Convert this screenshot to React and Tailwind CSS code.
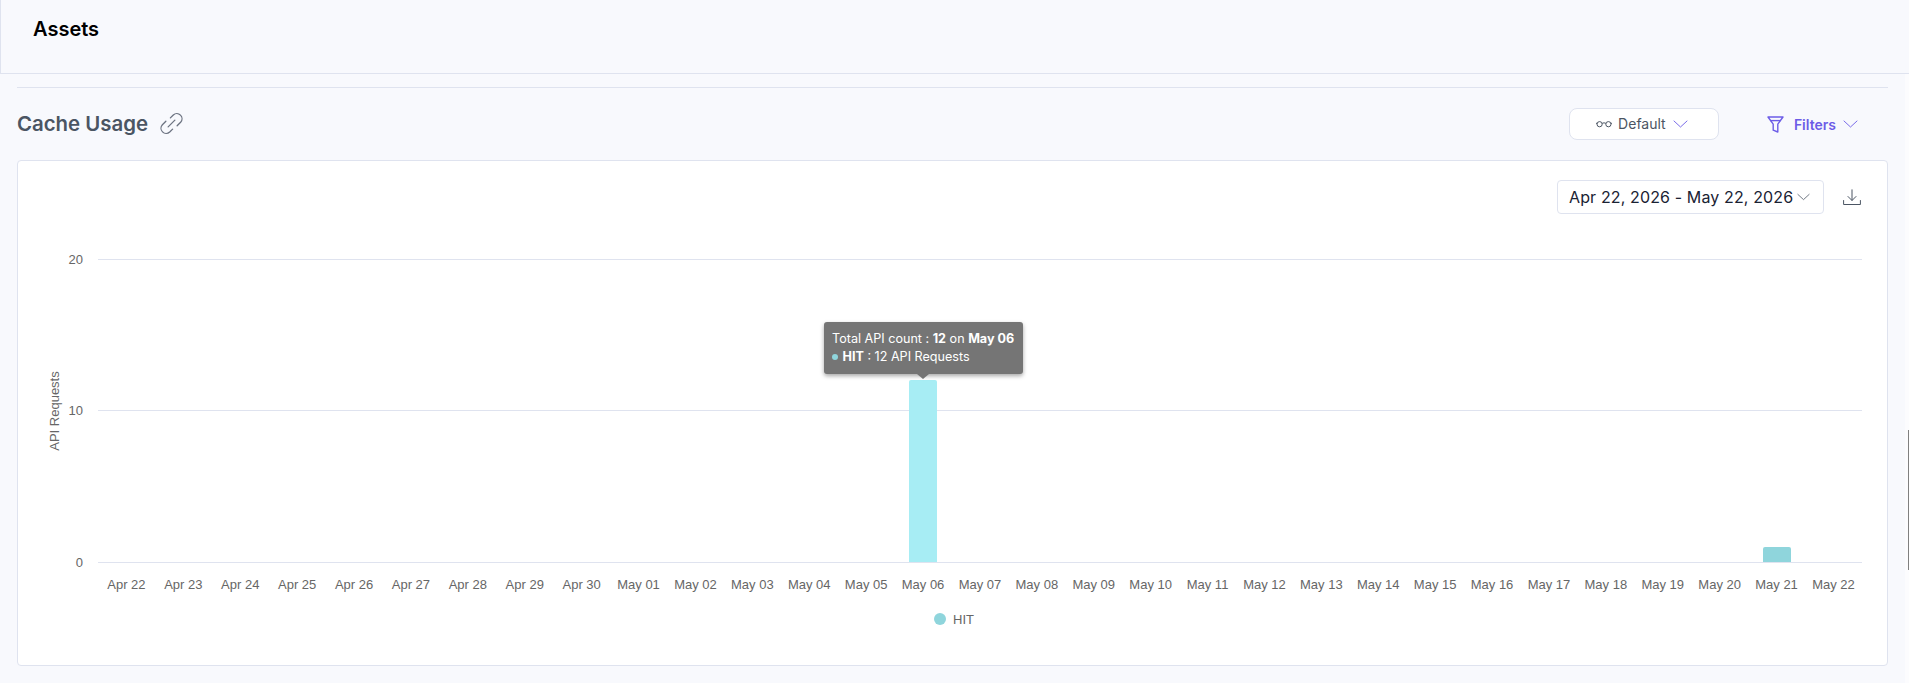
const inter = "font-['Inter',sans-serif]";

const days = [
  "Apr 22", "Apr 23", "Apr 24", "Apr 25", "Apr 26", "Apr 27", "Apr 28", "Apr 29", "Apr 30",
  "May 01", "May 02", "May 03", "May 04", "May 05", "May 06", "May 07", "May 08", "May 09",
  "May 10", "May 11", "May 12", "May 13", "May 14", "May 15", "May 16", "May 17", "May 18",
  "May 19", "May 20", "May 21", "May 22",
];

const plotLeft = 80;
const slot = 56.9;

const Chevron = ({ color, width = 15 }) => (
  <svg width={width} height="8" viewBox="0 0 15 8" fill="none" stroke={color} strokeWidth="0.9" strokeLinecap="round" strokeLinejoin="round" className="shrink-0">
    <path d="M1 1l6.5 6L14 1" />
  </svg>
);

const LinkIcon = () => (
  <svg width="27" height="27" viewBox="0 0 24 24" fill="none" stroke="#6b7280" strokeWidth="1.15" strokeLinecap="round">
    <path d="M11 7l2.6-2.6a4.6 4.6 0 0 1 6.5 6.5L17 14" />
    <path d="M13 17l-2.6 2.6a4.6 4.6 0 0 1-6.5-6.5L7 10" />
    <path d="M9 15l6-6" />
  </svg>
);

const GlassesIcon = () => (
  <svg width="16" height="8" viewBox="0 0 16 8" fill="none" stroke="#4b5563" strokeWidth="1" className="shrink-0">
    <circle cx="3.6" cy="4.2" r="2.6" />
    <circle cx="12.4" cy="4.2" r="2.6" />
    <path d="M6.2 3.4c1-.7 2.6-.7 3.6 0M1 3.6L0 3M15 3.6l1-.6" />
  </svg>
);

const FilterIcon = () => (
  <svg width="17" height="17" viewBox="0 0 17 17" fill="none" stroke="#6c5ce7" strokeWidth="1.4" strokeLinejoin="round" className="shrink-0">
    <path d="M1 1h15l-5.2 7.2v7.8l-4.6-1.8v-6z" />
    <path d="M3.4 4.6h10.2" />
  </svg>
);

const DownloadIcon = () => (
  <svg width="18" height="17" viewBox="0 0 18 17" fill="none" stroke="#4b5563" strokeWidth="1" strokeLinecap="round" strokeLinejoin="round" className="shrink-0">
    <path d="M9 .8v10.5M5 7.5l4 4 4-4" />
    <path d="M.6 11.5v4h16.8v-4" />
  </svg>
);

const Chart = () => (
  <svg width="1869" height="504" className="block" style={{ fontFamily: "'Liberation Sans', sans-serif" }}>
    {[98, 249, 401].map((y) => (
      <line key={y} x1={plotLeft} x2={1844} y1={y + 0.5} y2={y + 0.5} stroke="#dfe3ef" />
    ))}
    {[["20", 98], ["10", 249], ["0", 401]].map(([label, y]) => (
      <text key={label} x="65" y={y + 5} textAnchor="end" fontSize="13" fill="#666666">{label}</text>
    ))}
    <text transform="translate(41 250) rotate(-90)" textAnchor="middle" fontSize="13" fill="#666666">API Requests</text>
    <path d="M891 401v-180a2 2 0 0 1 2-2h24a2 2 0 0 1 2 2v180z" fill="#a7edf4" />
    <path d="M1745 401v-13a2 2 0 0 1 2-2h24a2 2 0 0 1 2 2v13z" fill="#8fd5dc" />
    {days.map((day, i) => (
      <text key={day} x={plotLeft + slot * (i + 0.5)} y="428" textAnchor="middle" fontSize="13" fill="#666666">{day}</text>
    ))}
    <circle cx="922" cy="458" r="6" fill="#8fd5dc" />
    <text x="935" y="463" fontSize="13" fill="#666666">HIT</text>
  </svg>
);

export default function App() {
  return (
    <div className={`${inter} w-[1909px] h-[683px] overflow-hidden bg-[#f8f9fd] relative`}>
      <header className="h-[74px] border-b border-l border-[#dfe3ef] pl-[32px] pt-[17px]">
        <h1 className="text-[20px] leading-[25px] font-semibold text-black">Assets</h1>
      </header>

      <main className="pl-[17px] pr-[21px] pt-[13px]">
        <div className="border-t border-[#dfe3ef]" />

        <div className="flex items-center justify-between h-[72px] pr-[30px]">
          <div className="flex items-center gap-[10px]">
            <h2 className="text-[20.4px] font-semibold text-[#4b5563]">Cache Usage</h2>
            <LinkIcon />
          </div>
          <div className="flex items-center">
            <button className="w-[150px] h-[32px] flex items-center justify-center gap-[6px] pr-[4px] bg-white border border-[#dfe3ef] rounded-[8px] text-[14px] leading-[32px] text-[#4b5563]">
              <GlassesIcon />
              <span className="mr-[1px]">Default</span>
              <Chevron color="#6c5ce7" />
            </button>
            <button className="ml-[48px] flex items-center text-[14px] font-semibold text-[#6c5ce7]">
              <FilterIcon />
              <span className="ml-[10px] mr-[7px]">Filters</span>
              <Chevron color="#6c5ce7" />
            </button>
          </div>
        </div>

        <section className="w-[1871px] h-[506px] bg-white border border-[#dfe3ef] rounded-[4px] relative">
          <div className="absolute right-[26px] top-[19px] flex items-center gap-[19px]">
            <div className="w-[267px] h-[34px] flex items-center pl-[11px] border border-[#dfe3ef] rounded-[4px] text-[16px] tracking-[0.13px] text-[#1a2233]">
              <span className="whitespace-nowrap">Apr 22, 2026 - May 22, 2026</span>
              <span className="ml-[4px]"><Chevron color="#4b5563" width={13} /></span>
            </div>
            <DownloadIcon />
          </div>
          <Chart />
          <div className="absolute left-[806px] top-[161px] w-[199px] h-[52px] bg-[#757575] rounded-[3px] shadow-[0_2px_4px_rgba(0,0,0,0.35)] px-[8px] pt-[8px] text-[12.6px] leading-[18px] text-white whitespace-nowrap">
            <div>Total API count : <b>12</b> on <b>May 06</b></div>
            <div className="flex items-center">
              <span className="w-[5.5px] h-[5.5px] rounded-full bg-[#8fd5dc] mr-[5px] shrink-0" />
              <span><b>HIT</b> : 12 API Requests</span>
            </div>
            <span className="absolute left-[93px] top-[52px] w-0 h-0 border-x-[6px] border-x-transparent border-t-[5px] border-t-[#757575]" />
          </div>
        </section>
      </main>

      <div className="absolute right-0 top-[74px] bottom-0 w-[4px] bg-[#fcfcfe]" />
      <div className="absolute right-0 top-[430px] w-[1px] h-[140px] bg-[#808080]" />
    </div>
  );
}
